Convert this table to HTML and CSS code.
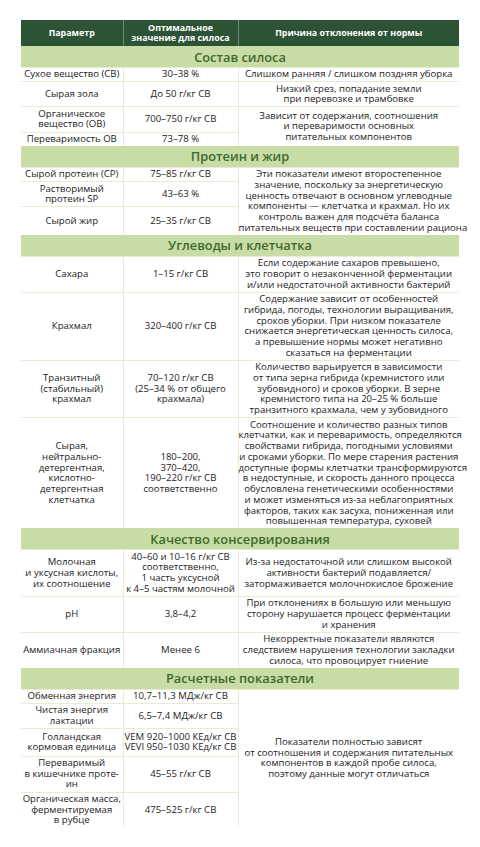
FILE: index.html
```html
<!DOCTYPE html>
<html lang="ru">
<head>
<meta charset="utf-8">
<link rel="stylesheet" href="styles.css">
</head>
<body>
<table class="silo">
  <colgroup><col class="c1"><col class="c2"><col class="c3"></colgroup>
  <thead>
    <tr><th>Параметр</th><th>Оптимальное<br>значение для силоса</th><th>Причина отклонения от нормы</th></tr>
  </thead>
  <tbody>
    <tr class="sec"><td colspan="3">Состав силоса</td></tr>
    <tr><td>Сухое вещество (СВ)</td><td>30–38 %</td><td>Слишком ранняя / слишком поздняя уборка</td></tr>
    <tr><td>Сырая зола</td><td>До 50 г/кг СВ</td><td>Низкий срез, попадание земли<br>при перевозке и трамбовке</td></tr>
    <tr><td>Органическое<br>вещество (ОВ)</td><td>700–750 г/кг СВ</td><td rowspan="2">Зависит от содержания, соотношения<br>и переваримости основных<br>питательных компонентов</td></tr>
    <tr><td>Переваримость ОВ</td><td>73–78 %</td></tr>

    <tr class="sec"><td colspan="3">Протеин и жир</td></tr>
    <tr><td>Сырой протеин (СР)</td><td>75–85 г/кг СВ</td><td rowspan="3">Эти показатели имеют второстепенное<br>значение, поскольку за энергетическую<br>ценность отвечают в основном углеводные<br>компоненты — клетчатка и крахмал. Но их<br>контроль важен для подсчёта баланса<br>питательных веществ при составлении рациона</td></tr>
    <tr><td>Растворимый<br>протеин SP</td><td>43–63 %</td></tr>
    <tr class="tall"><td>Сырой жир</td><td>25–35 г/кг СВ</td></tr>

    <tr class="sec"><td colspan="3">Углеводы и клетчатка</td></tr>
    <tr><td>Сахара</td><td>1–15 г/кг СВ</td><td>Если содержание сахаров превышено,<br>это говорит о незаконченной ферментации<br>и/или недостаточной активности бактерий</td></tr>
    <tr><td>Крахмал</td><td>320–400 г/кг СВ</td><td>Содержание зависит от особенностей<br>гибрида, погоды, технологии выращивания,<br>сроков уборки. При низком показателе<br>снижается энергетическая ценность силоса,<br>а превышение нормы может негативно<br>сказаться на ферментации</td></tr>
    <tr><td>Транзитный<br>(стабильный)<br>крахмал</td><td>70–120 г/кг СВ<br>(25–34 % от общего<br>крахмала)</td><td>Количество варьируется в зависимости<br>от типа зерна гибрида (кремнистого или<br>зубовидного) и сроков уборки. В зерне<br>кремнистого типа на 20–25 % больше<br>транзитного крахмала, чем у зубовидного</td></tr>
    <tr><td>Сырая,<br>нейтрально-<br>детергентная,<br>кислотно-<br>детергентная<br>клетчатка</td><td>180–200,<br>370–420,<br>190–220 г/кг СВ<br>соответственно</td><td>Соотношение и количество разных типов<br>клетчатки, как и переваримость, определяются<br>свойствами гибрида, погодными условиями<br>и сроками уборки. По мере старения растения<br>доступные формы клетчатки трансформируются<br>в недоступные, и скорость данного процесса<br>обусловлена генетическими особенностями<br>и может изменяться из-за неблагоприятных<br>факторов, таких как засуха, пониженная или<br>повышенная температура, суховей</td></tr>

    <tr class="sec"><td colspan="3">Качество консервирования</td></tr>
    <tr><td>Молочная<br>и уксусная кислоты,<br>их соотношение</td><td>40–60 и 10–16 г/кг СВ<br>соответственно,<br>1 часть уксусной<br>к 4–5 частям молочной</td><td>Из-за недостаточной или слишком высокой<br>активности бактерий подавляется/<br>затормаживается молочнокислое брожение</td></tr>
    <tr><td>pH</td><td>3,8–4,2</td><td>При отклонениях в большую или меньшую<br>сторону нарушается процесс ферментации<br>и хранения</td></tr>
    <tr><td>Аммиачная фракция</td><td>Менее 6</td><td>Некорректные показатели являются<br>следствием нарушения технологии закладки<br>силоса, что провоцирует гниение</td></tr>

    <tr class="sec"><td colspan="3">Расчетные показатели</td></tr>
    <tr><td>Обменная энергия</td><td>10,7–11,3 МДж/кг СВ</td><td rowspan="5">Показатели полностью зависят<br>от соотношения и содержания питательных<br>компонентов в каждой пробе силоса,<br>поэтому данные могут отличаться</td></tr>
    <tr><td>Чистая энергия<br>лактации</td><td>6,5–7,4 МДж/кг СВ</td></tr>
    <tr class="mid"><td>Голландская<br>кормовая единица</td><td>VEM 920–1000 КЕд/кг СВ<br>VEVI 950–1030 КЕд/кг СВ</td></tr>
    <tr><td>Переваримый<br>в кишечнике проте-<br>ин</td><td>45–55 г/кг СВ</td></tr>
    <tr><td>Органическая масса,<br>ферментируемая<br>в рубце</td><td>475–525 г/кг СВ</td></tr>
  </tbody>
</table>
</body>
</html>
```
FILE: styles.css
```css
html, body {
  background: #ffffff;
}
body {
  margin: 20px 0 0 21px;
  font-family: "Open Sans", "Noto Sans", sans-serif;
  color: #232323;
}
.silo {
  width: 438px;
  border-collapse: collapse;
  table-layout: fixed;
  font-size: 9.6px;
  line-height: 10.75px;
}
.c1 { width: 102px; }
.c2 { width: 115px; }
.c3 { width: 221px; }

.silo th {
  background: #2c5335;
  color: #ffffff;
  font-weight: 700;
  font-size: 8.9px;
  line-height: 10px;
  height: 26px;
  padding: 0 2px;
  text-align: center;
  vertical-align: middle;
  border-left: 1px solid #6e8a72;
}
.silo th:first-child { border-left: none; }

.silo td {
  text-align: center;
  vertical-align: middle;
  padding: 1.3px 0;
  white-space: nowrap;
  border-top: 1px solid #ebead6;
  border-left: 1px solid #ebead6;
}
.silo td:first-child { border-left: none; }

.silo tr.sec td {
  background: #c8dca5;
  color: #3c6a2b;
  font-size: 12.8px;
  font-weight: 600;
  height: 21px;
  padding: 0;
  line-height: 14px;
  border: none;
}
.silo tr.tall td { height: 25px; }
.silo tr.mid td { height: 24px; }
```
